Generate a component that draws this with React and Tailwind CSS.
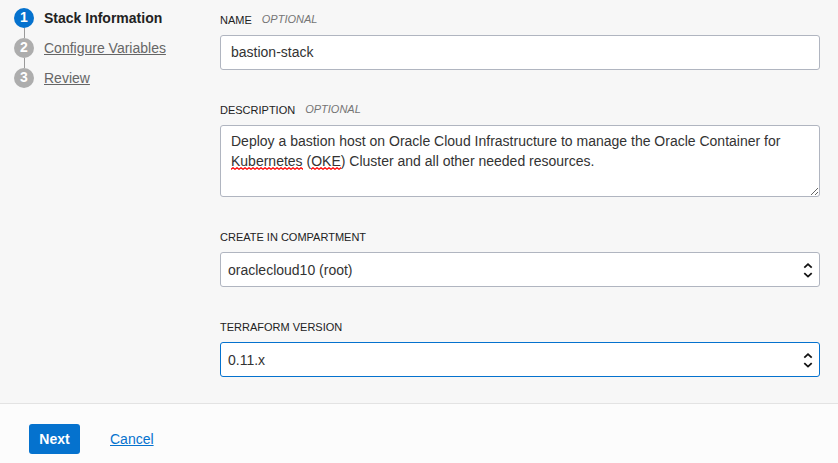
import React from "react";

const steps = [
  { id: 1, title: "Stack Information", active: true },
  { id: 2, title: "Configure Variables", active: false },
  { id: 3, title: "Review", active: false },
];

function Steps() {
  return (
    <nav aria-label="Wizard steps" className="w-[220px] shrink-0 pt-2 pl-3.5">
      <ol>
        {steps.map((step, i) => (
          <li key={step.id} className="flex gap-2.5">
            <div className="flex flex-col items-center">
              <span
                className={
                  step.active
                    ? "h-5 w-5 rounded-full bg-[#0572ce] text-center text-sm leading-[19px] font-bold text-white"
                    : "h-5 w-5 rounded-full bg-[#adadad] text-center text-sm leading-[19px] font-bold text-white"
                }
              >
                {step.id}
              </span>
              {i < steps.length - 1 && <span className="h-2.5 w-px bg-[#9a9a9a]" />}
            </div>
            {step.active ? (
              <span aria-current="step" className="text-sm font-bold text-[#222]">
                {step.title}
              </span>
            ) : (
              <a href="#" className="text-sm text-[#666] underline">
                {step.title}
              </a>
            )}
          </li>
        ))}
      </ol>
    </nav>
  );
}

function Field({ id, label, optional, children }) {
  return (
    <div>
      <div className="mb-1.5 flex h-[18px] gap-2.5 text-[11px]">
        <label htmlFor={id} className="leading-[18px] text-[#222]">
          {label}
        </label>
        {optional && <em className="leading-4 text-[#757575]">OPTIONAL</em>}
      </div>
      {children}
    </div>
  );
}

function Select({ id, value, focused }) {
  return (
    <div className="relative">
      <select
        id={id}
        defaultValue={value}
        className={
          focused
            ? "block h-[35px] w-full appearance-none rounded-[3px] border border-[#0572ce] bg-white px-[7px] text-sm text-[#333] outline-none"
            : "block h-[35px] w-full appearance-none rounded-[3px] border border-[#b0b5c0] bg-white px-[7px] text-sm text-[#333] outline-none"
        }
      >
        <option>{value}</option>
      </select>
      <svg
        aria-hidden="true"
        viewBox="0 0 10 16"
        className="pointer-events-none absolute top-2.5 right-[7px] h-4 w-2.5"
        fill="none"
        stroke="#111"
        strokeWidth="1.8"
      >
        <path d="M1.3 5.6 5 2.2 8.7 5.6M1.3 11.2 5 14.6 8.7 11.2" />
      </svg>
    </div>
  );
}

// Spell-check marker drawn beneath a word
function Squiggle({ id, className }) {
  return (
    <svg aria-hidden="true" className={className}>
      <defs>
        <pattern id={id} width="4" height="3" patternUnits="userSpaceOnUse">
          <path d="M-2 .7 0 2.3 2 .7 4 2.3 6 .7" fill="none" stroke="#f00" strokeWidth="1.2" />
        </pattern>
      </defs>
      <rect width="100%" height="3" fill={`url(#${id})`} />
    </svg>
  );
}

export default function App() {
  return (
    <div className="flex min-h-screen flex-col bg-[#f7f7f7] font-['Liberation_Sans',Arial,sans-serif]">
      <main className="flex">
        <Steps />
        <form className="flex min-w-0 flex-1 flex-col gap-[31px] pt-[11px] pr-[18px] pb-[26px]">
          <Field id="name" label="NAME" optional>
            <input
              id="name"
              type="text"
              defaultValue="bastion-stack"
              className="block h-[35px] w-full rounded-[3px] border border-[#b0b5c0] bg-white px-2.5 pb-0.5 text-sm text-[#333] outline-none"
            />
          </Field>
          <Field id="description" label="DESCRIPTION" optional>
            <div className="relative">
              <textarea
                id="description"
                spellCheck={false}
                defaultValue="Deploy a bastion host on Oracle Cloud Infrastructure to manage the Oracle Container for Kubernetes (OKE) Cluster and all other needed resources."
                className="block h-[72px] w-full resize-y rounded-[3px] border border-[#b0b5c0] bg-white px-2.5 py-[5px] text-sm leading-5 text-[#333] outline-none"
              />
              <Squiggle id="squiggle-kubernetes" className="pointer-events-none absolute top-[42px] left-[11px] h-[3px] w-[72px]" />
              <Squiggle id="squiggle-oke" className="pointer-events-none absolute top-[42px] left-[91px] h-[3px] w-[30px]" />
            </div>
          </Field>
          <Field id="compartment" label="CREATE IN COMPARTMENT">
            <Select id="compartment" value="oraclecloud10 (root)" />
          </Field>
          <Field id="terraform" label="TERRAFORM VERSION">
            <Select id="terraform" value="0.11.x" focused />
          </Field>
        </form>
      </main>
      <footer className="flex flex-1 items-start gap-[30px] border-t border-[#e3e3e3] bg-[#fcfcfc] px-[29px] pt-5">
        <button type="button" className="h-[30px] w-[51px] rounded-[3px] bg-[#0572ce] text-sm font-bold text-white">
          Next
        </button>
        <a href="#" className="text-sm leading-[30px] text-[#0572ce] underline">
          Cancel
        </a>
      </footer>
    </div>
  );
}
